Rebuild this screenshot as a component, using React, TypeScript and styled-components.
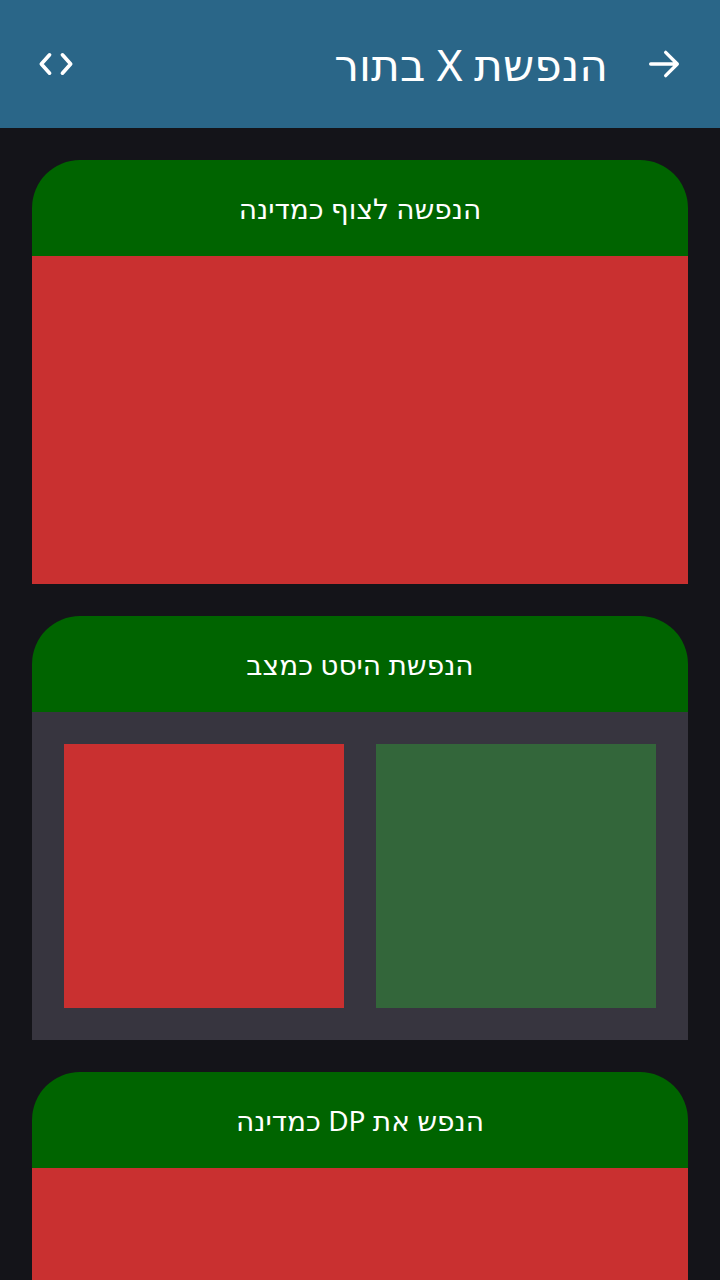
import React from "react";
import styled, { createGlobalStyle } from "styled-components";

const Global = createGlobalStyle`
  html, body { margin: 0; padding: 0; background: #141419; }
  body { font-family: "Noto Sans", "DejaVu Sans", sans-serif; }
`;

const Page = styled.div`
  min-height: 1280px;
  background: #141419;
  direction: rtl;
`;

const TopBar = styled.header`
  height: 128px;
  background: #2a6688;
  display: flex;
  align-items: center;
  padding: 0 32px;
  box-sizing: border-box;
  color: #fff;
`;

const IconBtn = styled.button`
  width: 48px;
  height: 48px;
  background: none;
  border: none;
  padding: 0;
  color: #fff;
  display: flex;
  align-items: center;
  justify-content: center;
`;

const Title = styled.h1`
  flex: 1;
  margin: 0 32px 0 0;
  font-size: 44px;
  font-weight: 400;
  text-align: right;
  line-height: 1;
`;

const List = styled.main`
  display: flex;
  flex-direction: column;
  gap: 32px;
  padding: 32px;
`;

const Card = styled.section`
  display: flex;
  flex-direction: column;
`;

const CardHead = styled.div`
  height: 96px;
  background: #006400;
  border-radius: 48px 48px 0 0;
  display: flex;
  align-items: center;
  justify-content: center;
  color: #fff;
  font-size: 28px;
`;

const Body = styled.div<{ $tone: "red" | "gray" }>`
  height: 328px;
  background: ${(p) => (p.$tone === "red" ? "#c93030" : "#37353f")};
  box-sizing: border-box;
  padding: ${(p) => (p.$tone === "gray" ? "32px" : "0")};
  display: grid;
  grid-template-columns: 1fr 1fr;
  gap: 32px;
`;

const Swatch = styled.div<{ $color: string }>`
  background: ${(p) => p.$color};
`;

export default function App() {
  return (
    <Page>
      <Global />
      <TopBar>
        <IconBtn aria-label="back">
          <svg width="40" height="40" viewBox="0 0 24 24" fill="none" stroke="currentColor" strokeWidth="2" strokeLinecap="round" strokeLinejoin="round">
            <path d="M4 12h16M13 5l7 7-7 7" />
          </svg>
        </IconBtn>
        <Title>הנפשת X בתור</Title>
        <IconBtn aria-label="code">
          <svg width="44" height="44" viewBox="0 0 24 24" fill="none" stroke="currentColor" strokeWidth="2" strokeLinecap="round" strokeLinejoin="round">
            <path d="M8.5 7 4 12l4.5 5M15.5 7 20 12l-4.5 5" />
          </svg>
        </IconBtn>
      </TopBar>
      <List>
        <Card>
          <CardHead>הנפשה לצוף כמדינה</CardHead>
          <Body $tone="red" />
        </Card>
        <Card>
          <CardHead>הנפשת היסט כמצב</CardHead>
          <Body $tone="gray">
            <Swatch $color="#33663a" />
            <Swatch $color="#c93030" />
          </Body>
        </Card>
        <Card>
          <CardHead>הנפש את DP כמדינה</CardHead>
          <Body $tone="red" />
        </Card>
      </List>
    </Page>
  );
}
